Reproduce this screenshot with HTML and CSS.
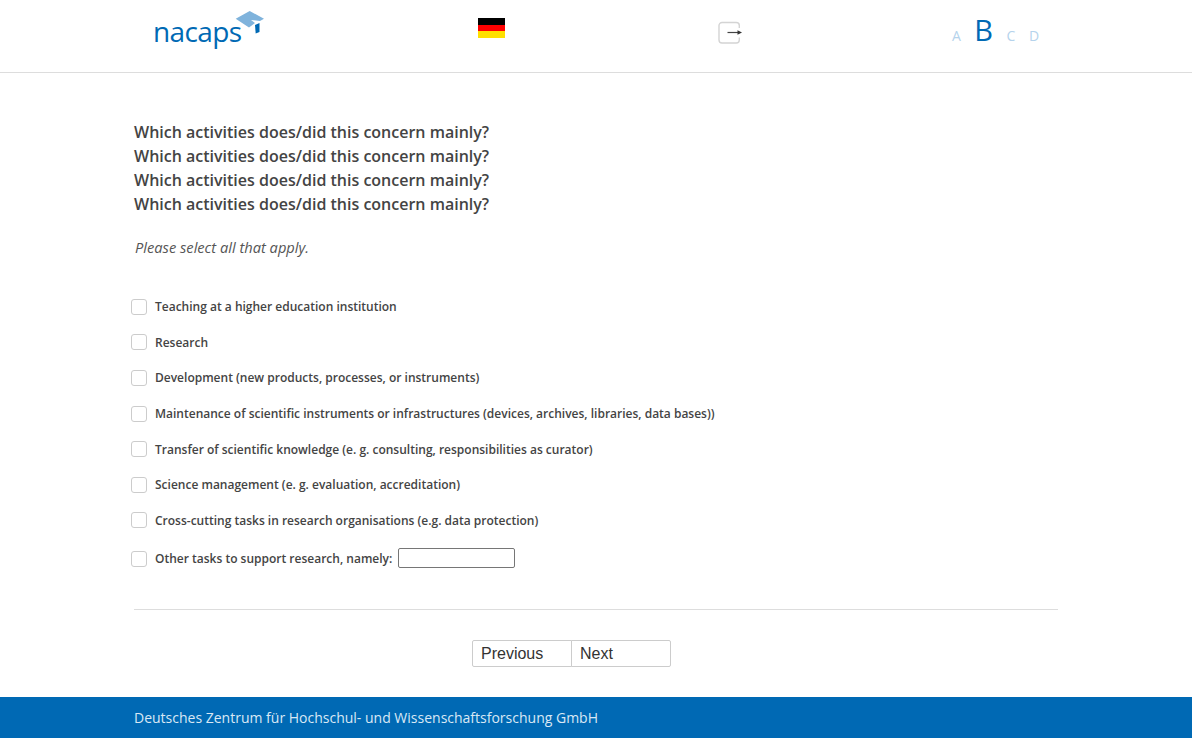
FILE: index.html
```html
<!DOCTYPE html>
<html lang="en">
<head>
<meta charset="utf-8">
<title>nacaps</title>
<link rel="stylesheet" href="styles.css">
</head>
<body>
<header class="topbar">
  <div class="brand">
    <span class="brand-name">nacaps</span>
    <svg class="brand-cap" width="34" height="30" viewBox="0 0 34 30" aria-hidden="true">
      <path fill="#7fb3dc" d="M1.700 7.800 L15.700 0 L30 7.700 L26 10 L17 9 L21 12 L15 16.500 Z"/>
      <path fill="#0069b4" d="M21 14 L25.500 12 L25.500 21 L21.700 22.500 Z"/>
    </svg>
  </div>
  <div class="flag" aria-label="Deutsch"><span class="flag-black"></span><span class="flag-red"></span><span class="flag-gold"></span></div>
  <a class="logout" aria-label="Logout">
    <svg width="24" height="23" viewBox="0 0 24 23" aria-hidden="true">
      <path fill="none" stroke="#d4d4d4" stroke-width="1.4" d="M21.300 16.500 V19 a3 3 0 0 1 -3 3 H4 a3 3 0 0 1 -3 -3 V4.500 a3 3 0 0 1 3 -3 H18.300 a3 3 0 0 1 3 3 V7"/>
      <path fill="none" stroke="#444" stroke-width="1.2" d="M9.500 11.500 H20"/>
      <path fill="#333" d="M24 11.500 L19.500 9.300 V13.700 Z"/>
    </svg>
  </a>
  <div class="sizes">
    <span class="size">A</span>
    <span class="size size-active">B</span>
    <span class="size">C</span>
    <span class="size">D</span>
  </div>
</header>

<main class="content">
  <h1 class="question">Which activities does/did this concern mainly?<br>Which activities does/did this concern mainly?<br>Which activities does/did this concern mainly?<br>Which activities does/did this concern mainly?</h1>
  <p class="hint">Please select all that apply.</p>

  <ul class="options">
    <li class="option"><span class="box"></span><span>Teaching at a higher education institution</span></li>
    <li class="option"><span class="box"></span><span>Research</span></li>
    <li class="option"><span class="box"></span><span>Development (new products, processes, or instruments)</span></li>
    <li class="option"><span class="box"></span><span>Maintenance of scientific instruments or infrastructures (devices, archives, libraries, data bases))</span></li>
    <li class="option"><span class="box"></span><span>Transfer of scientific knowledge (e. g. consulting, responsibilities as curator)</span></li>
    <li class="option"><span class="box"></span><span>Science management (e. g. evaluation, accreditation)</span></li>
    <li class="option"><span class="box"></span><span>Cross-cutting tasks in research organisations (e.g. data protection)</span></li>
    <li class="option option-other"><span class="box"></span><span>Other tasks to support research, namely:</span><input class="other-input" type="text" aria-label="Other"></li>
  </ul>

  <hr class="divider">

  <div class="pager">
    <button class="pager-btn" type="button">Previous</button><button class="pager-btn" type="button">Next</button>
  </div>
</main>

<footer class="footer">
  <div class="footer-text">Deutsches Zentrum für Hochschul- und Wissenschaftsforschung GmbH</div>
</footer>
</body>
</html>
```
FILE: styles.css
```css
* { box-sizing: border-box; }
html, body { margin: 0; padding: 0; background: #fff; }
body { font-family: "Open Sans", sans-serif; color: #444; }

.topbar {
  height: 73px;
  border-bottom: 1px solid #ddd;
  display: grid;
  grid-template-columns: 478px 240px 234px 1fr;
  align-items: start;
}
.brand { padding: 10px 0 0 153px; display: flex; align-items: flex-start; }
.brand-name {
  font-family: "Open Sans", sans-serif;
  font-size: 28px;
  line-height: 42px;
  letter-spacing: -0.6px;
  color: #0069b4;
}
.brand-cap { margin: 1px 0 0 -8px; }

.flag { width: 27px; margin-top: 18px; display: flex; flex-direction: column; }
.flag span { height: 6.67px; display: block; }
.flag-black { background: #000; }
.flag-red { background: #f00; }
.flag-gold { background: #ffe000; }

.logout { display: block; margin-top: 21px; height: 23px; }

.sizes { display: flex; align-items: baseline; gap: 13.5px; padding-top: 10px; color: #b5d3ec; }
.size { font-size: 14px; line-height: 40px; }
.size-active { font-size: 29px; color: #0069b4; }

.content { width: 924px; margin: 0 0 0 134px; }

.question {
  margin: 47px 0 0;
  font-size: 16px;
  line-height: 24px;
  font-weight: 600;
  color: #444;
}
.hint {
  margin: 20px 0 0;
  font-size: 14.67px;
  line-height: 22px;
  font-style: italic;
  color: #555;
  padding-left: 1px;
}

.options { list-style: none; margin: 31px 0 0 -3px; padding: 0; }
.option {
  display: flex;
  align-items: center;
  gap: 8px;
  height: 35.6px;
  font-size: 12px;
  font-weight: 600;
  color: #444;
}
.option-other { height: 40.7px; }
.box {
  width: 16px;
  height: 16px;
  border: 1px solid #ccc;
  border-radius: 3px;
  background: #fff;
  flex: none;
}
.other-input {
  width: 117px;
  height: 20px;
  margin: -1px 0 0 -2px;
  padding: 0 4px;
  border: 1px solid #767676;
  border-radius: 2px;
  background: #fff;
}

.divider { border: 0; border-top: 1px solid #ddd; margin: 30px 0 0; }

.pager { display: flex; justify-content: center; margin-top: 30px; padding-right: 49px; }
.pager-btn {
  width: 100px;
  height: 27px;
  padding: 1px 8px 0;
  background: #fff;
  border: 1px solid #ccc;
  font-family: "Liberation Sans", Arial, sans-serif;
  font-size: 16px;
  color: #333;
  text-align: left;
  border-radius: 2px 0 0 2px;
}
.pager-btn + .pager-btn { margin-left: -1px; border-radius: 0 2px 2px 0; }

.footer { margin-top: 30px; height: 41px; background: #0069b4; display: flex; align-items: center; }
.footer-text { margin-left: 134px; font-size: 14px; color: #d9e8f5; }
```
